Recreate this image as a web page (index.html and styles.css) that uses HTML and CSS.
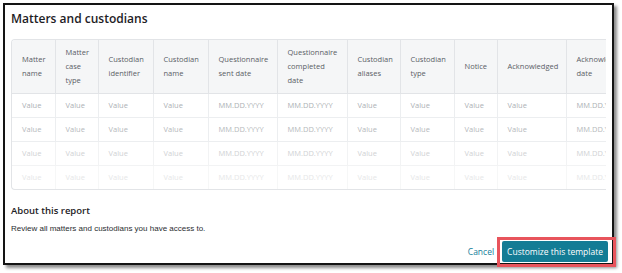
FILE: index.html
```html
<!DOCTYPE html>
<html>
<head>
	<title>Matters and custodians</title>
	<link rel="stylesheet" href="styles.css">
</head>
<body>
	<div class="dialog">
		<h1 class="title">Matters and custodians</h1>
		<div class="table-wrap">
			<table class="report">
				<colgroup>
					<col style="width:43px"><col style="width:43px"><col style="width:55px"><col style="width:55px">
					<col style="width:69px"><col style="width:70px"><col style="width:53px"><col style="width:54px">
					<col style="width:43px"><col style="width:69px"><col style="width:80px">
				</colgroup>
				<thead>
					<tr>
						<th>Matter name</th>
						<th>Matter case type</th>
						<th>Custodian identifier</th>
						<th>Custodian name</th>
						<th>Questionnaire sent date</th>
						<th>Questionnaire completed date</th>
						<th>Custodian aliases</th>
						<th>Custodian type</th>
						<th>Notice</th>
						<th>Acknowledged</th>
						<th>Acknowledged date</th>
					</tr>
				</thead>
				<tbody>
				</tbody>
			</table>
		</div>
		<h2 class="about">About this report</h2>
		<p class="desc">Review all matters and custodians you have access to.</p>
		<div class="footer">
			<a href="#" class="cancel">Cancel</a>
			<span class="highlight"><button class="primary">Customize this template</button></span>
		</div>
	</div>

	<script type="text/javascript">
		(function(){
			let fades = ["row-1","row-2","row-3","row-4"];
			let html = "";
			for(let i=0;i<fades.length;i++){
				html += `
					<tr class="${fades[i]}">
						<td>Value</td><td>Value</td><td>Value</td><td>Value</td>
						<td>MM.DD.YYYY</td><td>MM.DD.YYYY</td>
						<td>Value</td><td>Value</td><td>Value</td><td>Value</td>
						<td>MM.DD.YYYY</td>
					</tr>
				`;
			}
			document.querySelector(".report tbody").innerHTML = html;
		})();
	</script>
</body>
</html>
```

FILE: styles.css
```css
* {
	margin:0px;
	padding:0px;
	box-sizing:border-box;
}
body {
	font-family:"Open Sans",sans-serif;
	background:#fff;
	width:622px;
	height:273px;
	overflow:hidden;
}
.dialog {
	margin:3px 0 0 3px;
	width:611px;
	height:262px;
	border:2px solid #141414;
	box-shadow:3px 3px 3px rgba(0,0,0,0.45);
	padding:6px 4px 0 6px;
	display:flex;
	flex-direction:column;
	background:#fff;
}
.title {
	font-size:12px;
	line-height:16px;
	font-weight:600;
	color:#1d2125;
}
.table-wrap {
	margin-top:12px;
	margin-right:2px;
	border:1px solid #e2e4e7;
	border-right:none;
	border-radius:4px 0 0 4px;
	overflow:hidden;
}
.report {
	border-collapse:collapse;
	table-layout:fixed;
	width:634px;
}
.report th {
	height:53px;
	padding:0 10px;
	background:#f5f6f7;
	border-right:1px solid #e2e4e7;
	border-bottom:1px solid #e2e4e7;
	font-size:7.5px;
	line-height:14px;
	font-weight:400;
	color:#5a6066;
	text-align:left;
	vertical-align:middle;
	white-space:normal;
}
.report td {
	height:24px;
	padding:0 10px;
	border-right:1px solid #eceef0;
	border-bottom:1px solid #eceef0;
	font-size:7.5px;
	color:#adb1b5;
	white-space:nowrap;
	overflow:hidden;
}
.report tr.row-2 td {
	color:#b6b9bc;
}
.report tr.row-3 td {
	color:#d0d2d4;
	border-right-color:#f2f3f4;
	border-bottom-color:#f2f3f4;
}
.report tr.row-4 td {
	color:#e6e7e8;
	border-right-color:#f6f7f7;
	border-bottom:none;
}
.about {
	margin-top:14px;
	font-size:9.5px;
	line-height:13px;
	font-weight:600;
	color:#1d2125;
}
.desc {
	margin-top:6px;
	font-family:"Liberation Sans",Arial,sans-serif;
	font-size:8px;
	line-height:12px;
	color:#2a2d30;
}
.footer {
	margin-top:auto;
	display:flex;
	justify-content:flex-end;
	align-items:center;
	gap:8px;
	margin-bottom:1px;
}
.cancel {
	font-size:8.5px;
	color:#15809a;
	text-decoration:none;
}
.highlight {
	position:relative;
	display:inline-flex;
}
.highlight::after {
	content:"";
	position:absolute;
	top:-4px;
	left:-5px;
	right:-8px;
	bottom:-5px;
	border:3px solid #e8545c;
}
.primary {
	height:21px;
	padding:0 5px;
	background:#137c95;
	color:#fff;
	border:none;
	border-radius:2px;
	font-family:"Open Sans",sans-serif;
	font-size:8.5px;
	font-weight:500;
	cursor:pointer;
}
```
